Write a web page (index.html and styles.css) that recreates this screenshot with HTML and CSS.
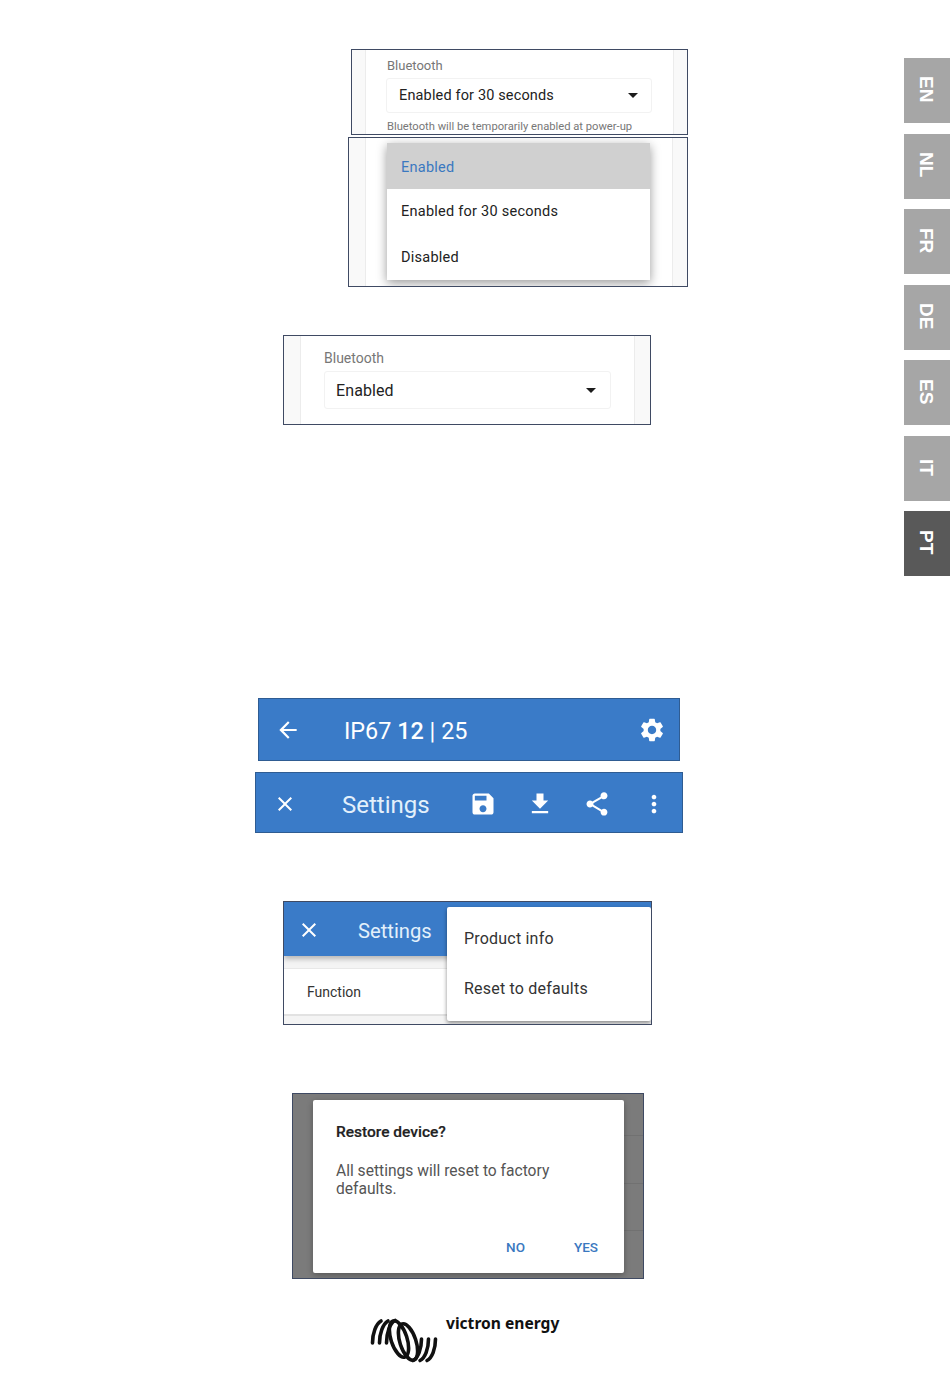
FILE: index.html
```html
<!DOCTYPE html>
<html lang="en">
<head>
  <meta charset="UTF-8">
  <meta name="viewport" content="width=device-width, initial-scale=1.0">
  <title>Bluetooth and settings manual page</title>
  <link rel="stylesheet" href="styles.css">
</head>
<body>
  <div class="page">
    <main class="sheet">
      <div class="shot shot-bt-timed">
        <div class="card">
          <div class="field-label">Bluetooth</div>
          <div class="select">Enabled for 30 seconds<span class="caret"></span></div>
          <div class="field-help">Bluetooth will be temporarily enabled at power-up</div>
        </div>
      </div>

      <div class="shot shot-bt-menu">
        <div class="card">
          <ul class="options">
            <li class="option selected">Enabled</li>
            <li class="option">Enabled for 30 seconds</li>
            <li class="option">Disabled</li>
          </ul>
        </div>
      </div>

      <div class="shot shot-bt-enabled">
        <div class="card">
          <div class="field-label">Bluetooth</div>
          <div class="select">Enabled<span class="caret"></span></div>
        </div>
      </div>

      <div class="toolbar toolbar-device">
        <svg class="icon icon-back" viewBox="0 0 24 24"><path d="M20 11H7.83l5.59-5.59L12 4l-8 8 8 8 1.41-1.41L7.83 13H20v-2z"/></svg>
        <div class="toolbar-title">IP67 <b>12</b> | 25</div>
        <svg class="icon icon-gear" viewBox="0 0 24 24"><path d="M19.14,12.94c0.04-0.3,0.06-0.61,0.06-0.94c0-0.32-0.02-0.64-0.07-0.94l2.03-1.58c0.18-0.14,0.23-0.41,0.12-0.61 l-1.92-3.32c-0.12-0.22-0.37-0.29-0.59-0.22l-2.39,0.96c-0.5-0.38-1.03-0.7-1.62-0.94L14.4,2.81c-0.04-0.24-0.24-0.41-0.48-0.41 h-3.84c-0.24,0-0.43,0.17-0.47,0.41L9.25,5.35C8.66,5.59,8.12,5.92,7.63,6.29L5.24,5.33c-0.22-0.08-0.47,0-0.59,0.22L2.74,8.87 C2.62,9.08,2.66,9.34,2.86,9.48l2.03,1.58C4.84,11.36,4.8,11.69,4.8,12s0.02,0.64,0.07,0.94l-2.03,1.58 c-0.18,0.14-0.23,0.41-0.12,0.61l1.92,3.32c0.12,0.22,0.37,0.29,0.59,0.22l2.39-0.96c0.5,0.38,1.03,0.7,1.62,0.94l0.36,2.54 c0.05,0.24,0.24,0.41,0.48,0.41h3.84c0.24,0,0.44-0.17,0.47-0.41l0.36-2.54c0.59-0.24,1.13-0.56,1.62-0.94l2.39,0.96 c0.22,0.08,0.47,0,0.59-0.22l1.92-3.32c0.12-0.22,0.07-0.47-0.12-0.61L19.14,12.94z M12,15.6c-1.98,0-3.6-1.62-3.6-3.6 s1.62-3.6,3.6-3.6s3.6,1.62,3.6,3.6S13.98,15.6,12,15.6z"/></svg>
      </div>

      <div class="toolbar toolbar-settings">
        <svg class="icon icon-close" viewBox="0 0 24 24"><path d="M19 6.41L17.59 5 12 10.59 6.41 5 5 6.41 10.59 12 5 17.59 6.41 19 12 13.41 17.59 19 19 17.59 13.41 12z"/></svg>
        <div class="toolbar-title">Settings</div>
        <div class="toolbar-actions">
          <svg class="icon" viewBox="0 0 24 24"><path d="M17 3H5c-1.11 0-2 .9-2 2v14c0 1.1.89 2 2 2h14c1.1 0 2-.9 2-2V7l-4-4zm-5 16c-1.66 0-3-1.34-3-3s1.34-3 3-3 3 1.34 3 3-1.34 3-3 3zm3-10H5V5h10v4z"/></svg>
          <svg class="icon" viewBox="0 0 24 24"><path d="M19 9h-4V3H9v6H5l7 7 7-7zM5 18v2h14v-2H5z"/></svg>
          <svg class="icon" viewBox="0 0 24 24"><path d="M18 16.08c-.76 0-1.44.3-1.96.77L8.91 12.7c.05-.23.09-.46.09-.7s-.04-.47-.09-.7l7.05-4.11c.54.5 1.25.81 2.04.81 1.66 0 3-1.34 3-3s-1.34-3-3-3-3 1.34-3 3c0 .24.04.47.09.7L8.04 9.81C7.5 9.31 6.79 9 6 9c-1.66 0-3 1.34-3 3s1.34 3 3 3c.79 0 1.5-.31 2.04-.81l7.12 4.16c-.05.21-.08.43-.08.65 0 1.61 1.31 2.92 2.92 2.92 1.61 0 2.92-1.31 2.92-2.92s-1.31-2.92-2.92-2.92z"/></svg>
          <svg class="icon" viewBox="0 0 24 24"><path d="M12 8c1.1 0 2-.9 2-2s-.9-2-2-2-2 .9-2 2 .9 2 2 2zm0 2c-1.1 0-2 .9-2 2s.9 2 2 2 2-.9 2-2-.9-2-2-2zm0 6c-1.1 0-2 .9-2 2s.9 2 2 2 2-.9 2-2-.9-2-2-2z"/></svg>
        </div>
      </div>

      <div class="shot shot-overflow">
        <div class="mini-bar">
          <svg class="icon icon-close" viewBox="0 0 24 24"><path d="M19 6.41L17.59 5 12 10.59 6.41 5 5 6.41 10.59 12 5 17.59 6.41 19 12 13.41 17.59 19 19 17.59 13.41 12z"/></svg>
          <div class="mini-title">Settings</div>
        </div>
        <div class="row">Function</div>
        <ul class="popup">
          <li>Product info</li>
          <li>Reset to defaults</li>
        </ul>
      </div>

      <div class="shot shot-dialog">
        <div class="dialog">
          <div class="dialog-title">Restore device?</div>
          <div class="dialog-text">All settings will reset to factory defaults.</div>
          <div class="dialog-buttons">
            <span>NO</span>
            <span>YES</span>
          </div>
        </div>
      </div>

      <div class="logo">
        <svg class="logo-mark" viewBox="0 0 68 45">
          <g fill="none" stroke="#111" stroke-width="3.6" stroke-linecap="round">
            <path d="M2.5 25C2.5 15 6 6 11 3"/>
            <path d="M9.5 25C9.5 15 13 6 18 3"/>
            <path d="M16.5 25C16.5 15 20 5 25 2.5"/>
            <ellipse cx="29" cy="21" rx="8" ry="19" transform="rotate(-18 29 21)"/>
            <ellipse cx="38" cy="24" rx="8" ry="19" transform="rotate(-18 38 24)"/>
            <path d="M51.5 21C51.5 31 48 40 43 42.5"/>
            <path d="M58.5 21C58.5 31 55 40 50 42.5"/>
            <path d="M65.5 21C65.5 31 62 40 57 42.5"/>
          </g>
        </svg>
        <div class="logo-text">victron energy</div>
      </div>
    </main>

    <aside class="tabs">
      <div class="tab">EN</div>
      <div class="tab">NL</div>
      <div class="tab">FR</div>
      <div class="tab">DE</div>
      <div class="tab">ES</div>
      <div class="tab">IT</div>
      <div class="tab active">PT</div>
    </aside>
  </div>
</body>
</html>
```

FILE: styles.css
```css
* {
  box-sizing: border-box;
}
html, body {
  margin: 0;
  padding: 0;
  background: #fff;
}
body {
  font-family: Roboto, "Liberation Sans", sans-serif;
  color: #222;
}
ul {
  list-style: none;
  margin: 0;
  padding: 0;
}
.page {
  display: flex;
  width: 950px;
  height: 1387px;
  overflow: hidden;
}
.sheet {
  width: 904px;
  padding-top: 49px;
}

/* language tabs */
.tabs {
  width: 46px;
  padding-top: 58px;
  display: flex;
  flex-direction: column;
  gap: 10.5px;
}
.tab {
  height: 65px;
  padding: 0 3px 2px 0;
  background: #a6a6a6;
  color: #fff;
  font-family: "Liberation Sans", Arial, sans-serif;
  font-weight: bold;
  font-size: 19px;
  writing-mode: vertical-rl;
  display: flex;
  align-items: center;
  justify-content: center;
}
.tab.active {
  background: #595959;
}

/* framed screenshots */
.shot {
  position: relative;
  overflow: hidden;
  border: 1px solid #3f4a63;
  background: #f9f9f9;
}
.card {
  height: 100%;
  background: #fff;
  border-left: 1px solid #ececec;
  border-right: 1px solid #ececec;
}
.shot-bt-timed {
  width: 337px;
  height: 86px;
  margin-left: 351px;
  padding: 0 13px;
}
.shot-bt-timed .card {
  padding: 7px 21px 0;
}
.shot-bt-menu {
  width: 340px;
  height: 150px;
  margin: 2px 0 0 348px;
  padding: 0 14px 0 16px;
}
.shot-bt-menu .card {
  padding: 5px 22px 0 21px;
}
.shot-bt-enabled {
  width: 368px;
  height: 90px;
  margin: 48px 0 0 283px;
  padding: 0 15px 0 16px;
}
.shot-bt-enabled .card {
  padding: 13px 23px 0 23px;
}
.field-label {
  font-size: 13px;
  line-height: 18px;
  color: #777;
}
.select {
  display: flex;
  align-items: center;
  justify-content: space-between;
  height: 35px;
  margin-top: 3px;
  margin-left: -1px;
  padding: 0 13px 0 12px;
  border: 1px solid #f2f2f2;
  border-radius: 3px;
  font-size: 14.5px;
  letter-spacing: 0.15px;
}
.caret {
  width: 0;
  height: 0;
  border-left: 5.5px solid transparent;
  border-right: 5.5px solid transparent;
  border-top: 5.5px solid #1c1c1c;
}
.field-help {
  margin-top: 7px;
  font-size: 11.2px;
  line-height: 14px;
  color: #777;
  white-space: nowrap;
}
.shot-bt-enabled .field-label {
  font-size: 14px;
}
.shot-bt-enabled .select {
  height: 38px;
  margin: 4px 0 0;
  padding: 0 14px 0 11px;
  font-size: 16px;
  letter-spacing: 0.1px;
}
.options {
  background: #fff;
  box-shadow: 0 3px 10px rgba(0, 0, 0, 0.4);
}
.option {
  height: 45.5px;
  padding: 1px 0 0 14px;
  display: flex;
  align-items: center;
  font-size: 14.5px;
  letter-spacing: 0.25px;
}
.option.selected {
  padding-top: 3px;
  background: #d0d0d0;
  color: #3a78c0;
}

/* toolbars */
.toolbar {
  display: flex;
  align-items: center;
  background: #3a7bc8;
  border: 1px solid #2f5c92;
  color: #fff;
}
.icon {
  display: block;
  fill: #fff;
  flex: none;
}
.toolbar-device {
  width: 422px;
  height: 63px;
  margin: 273px 0 0 258px;
  padding: 0 13px 0 16px;
}
.icon-back {
  width: 26px;
  height: 26px;
}
.icon-gear {
  width: 28px;
  height: 28px;
  margin-left: auto;
}
.toolbar-device .toolbar-title {
  margin-left: 43px;
  padding-top: 3px;
  font-size: 23.4px;
}
.toolbar-title b {
  font-weight: 500;
}
.toolbar-settings {
  width: 428px;
  height: 61px;
  margin: 11px 0 0 255px;
  padding: 2px 14px 0 17px;
}
.toolbar-settings .icon-close {
  width: 24px;
  height: 24px;
}
.toolbar-settings .toolbar-title {
  margin-left: 45px;
  padding-top: 2px;
  font-size: 24px;
  color: #e3f0fb;
}
.toolbar-actions {
  display: flex;
  gap: 29px;
  margin-left: auto;
  padding-left: 1px;
}
.toolbar-actions .icon {
  width: 28px;
  height: 28px;
}

/* overflow menu */
.shot-overflow {
  width: 369px;
  height: 124px;
  margin: 68px 0 0 283px;
  background: #f4f4f4;
}
.mini-bar {
  display: flex;
  align-items: center;
  height: 54px;
  padding: 2px 0 0 13px;
  background: #3a7bc8;
  box-shadow: 0 3px 5px rgba(0, 0, 0, 0.25);
  color: #e3f0fb;
}
.mini-bar .icon-close {
  width: 24px;
  height: 24px;
}
.mini-title {
  margin-left: 37px;
  padding-top: 1px;
  font-size: 20.2px;
}
.row {
  height: 48px;
  margin-top: 12px;
  padding-left: 23px;
  display: flex;
  align-items: center;
  background: #fff;
  border-top: 1px solid #e8e8e8;
  border-bottom: 2px solid #e2e2e2;
  font-size: 14px;
  color: #333;
}
.popup {
  position: absolute;
  top: 5px;
  left: 163px;
  width: 204px;
  height: 114px;
  padding-top: 6px;
  background: #fff;
  border-radius: 2px;
  box-shadow: 0 2px 4px rgba(0, 0, 0, 0.45);
}
.popup li {
  height: 50px;
  padding-left: 17px;
  display: flex;
  align-items: center;
  font-size: 16px;
  letter-spacing: 0.2px;
  color: #333;
}

/* dialog */
.shot-dialog {
  width: 352px;
  height: 186px;
  margin: 68px 0 0 292px;
  padding: 6px 19px 0 20px;
  background: repeating-linear-gradient(#7b7b7b 0, #7b7b7b 41px, #717171 41px, #717171 42px, #7b7b7b 42px, #7b7b7b 47.5px) right top / 20px 100% no-repeat #7b7b7b;
}
.dialog {
  height: 173px;
  padding: 22px 24px 0 23px;
  background: #fff;
  border-radius: 2px;
  box-shadow: 0 2px 6px rgba(0, 0, 0, 0.3);
}
.dialog-title {
  font-size: 15.5px;
  font-weight: 500;
  line-height: 20px;
  -webkit-text-stroke: 0.2px #222;
}
.dialog-text {
  margin-top: 20px;
  font-size: 15.6px;
  line-height: 18px;
  color: #555;
}
.dialog-buttons {
  display: flex;
  justify-content: flex-end;
  gap: 49px;
  margin-top: 41px;
  margin-right: 2px;
  font-size: 13.5px;
  font-weight: 500;
  color: #3a78c0;
}

/* footer logo */
.logo {
  display: flex;
  align-items: flex-start;
  margin: 35px 0 0 370px;
}
.logo-mark {
  width: 68px;
  height: 45px;
  margin-top: 4px;
}
.logo-text {
  margin-left: 8px;
  font-family: "Noto Sans", sans-serif;
  font-size: 15.6px;
  font-weight: 700;
  line-height: 18px;
  color: #111;
  white-space: nowrap;
}
```
